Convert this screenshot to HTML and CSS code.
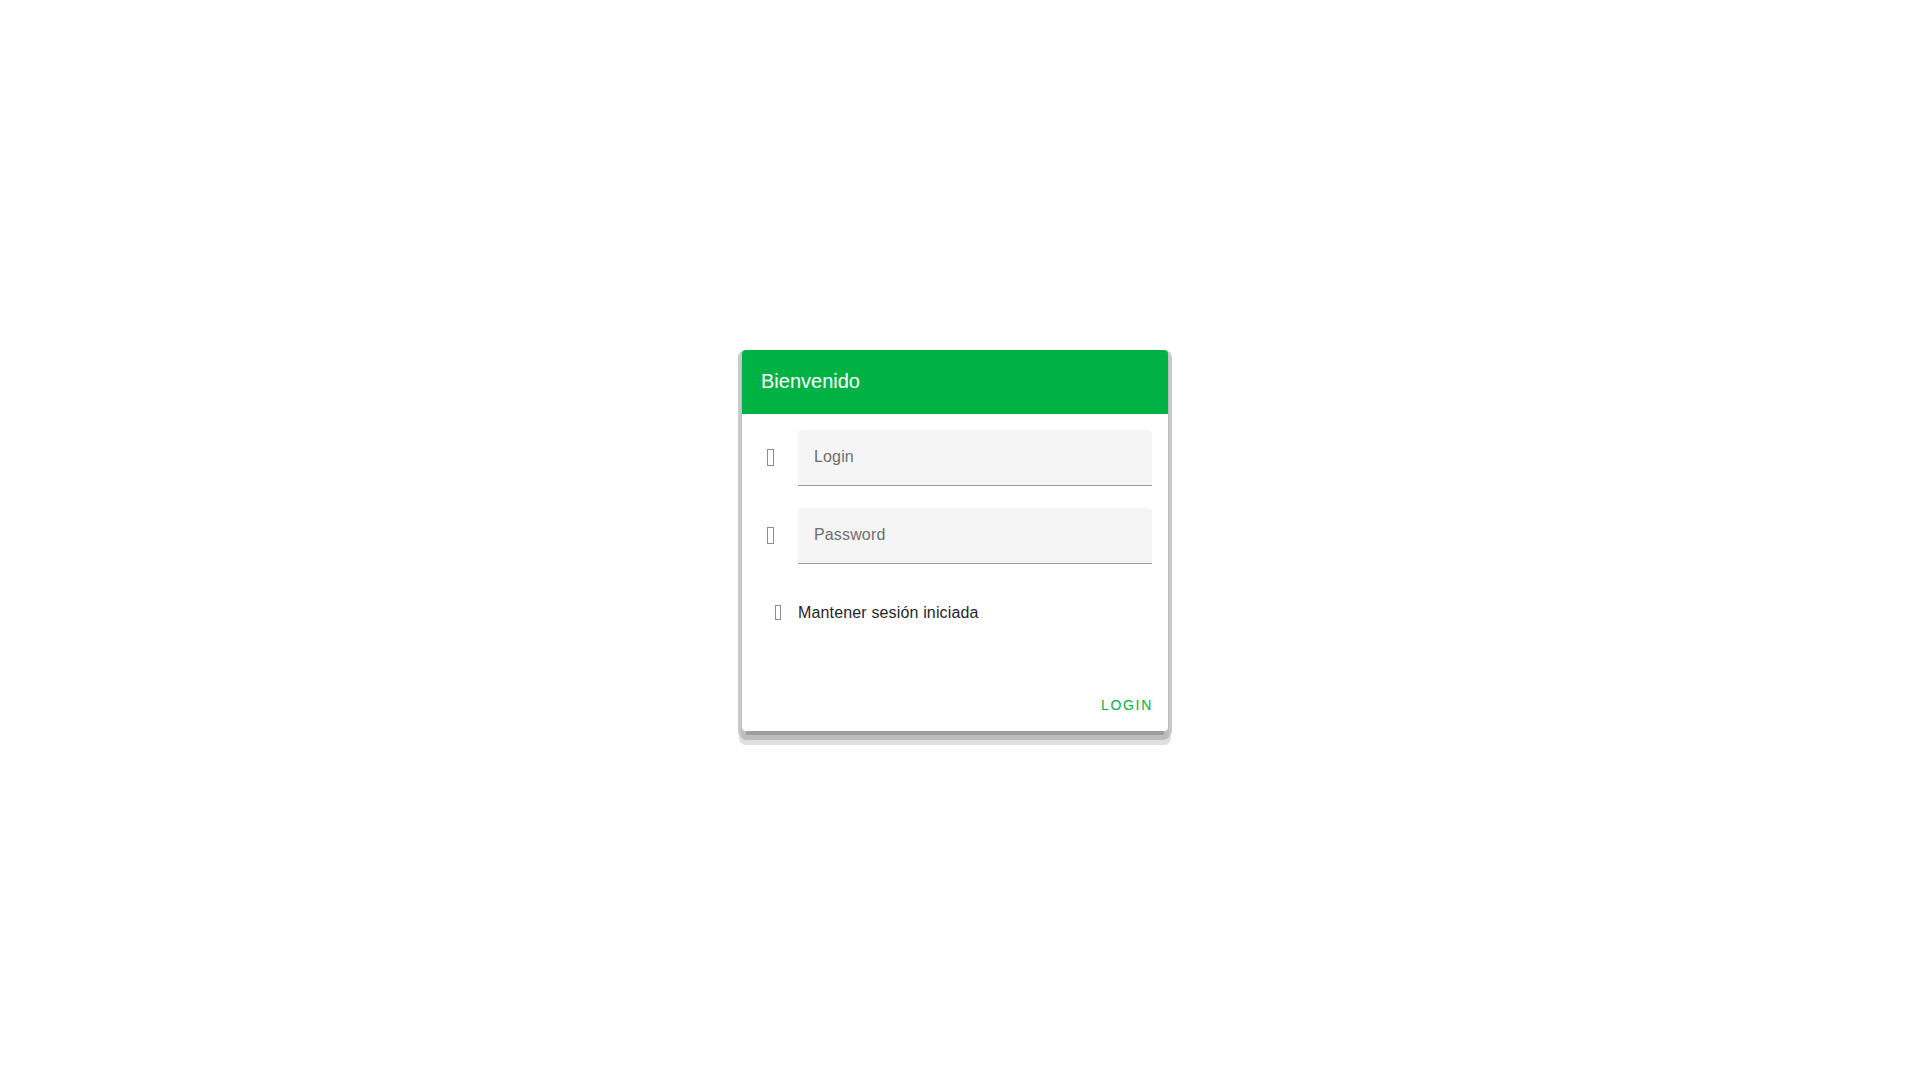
FILE: index.html
```html
<!DOCTYPE html>
<html lang="es">
<head>
<meta charset="utf-8">
<title>Bienvenido</title>
<link rel="stylesheet" href="styles.css">
</head>
<body>
<main class="page">
  <section class="card">
    <header class="card-title">Bienvenido</header>
    <div class="card-text">
      <div class="field-row">
        <span class="prepend"><span class="tofu"></span></span>
        <div class="field"><span class="field-label">Login</span></div>
      </div>
      <div class="field-row">
        <span class="prepend"><span class="tofu"></span></span>
        <div class="field"><span class="field-label">Password</span></div>
      </div>
      <div class="check-row">
        <span class="tofu tofu-small"></span>
        <span class="check-label">Mantener sesión iniciada</span>
      </div>
    </div>
    <div class="card-actions">
      <button class="btn-text" type="button">LOGIN</button>
    </div>
  </section>
</main>
</body>
</html>
```

FILE: styles.css
```css
html, body {
  margin: 0;
  height: 100%;
}

body {
  background: #ffffff;
  font-family: "Liberation Sans", Arial, sans-serif;
  color: #212121;
}

.page {
  min-height: 100vh;
  box-sizing: border-box;
  display: flex;
  align-items: center;
  justify-content: center;
  padding-right: 10px;
}

.card {
  width: 426px;
  background: #ffffff;
  border-radius: 4px;
  box-shadow:
    0 8px 0 -4px #9e9e9e,
    0 8px 0 1px #bdbdbd,
    0 4px 0 4px #cacaca,
    0 11px 0 3px #e0e0e0;
}

.card-title {
  height: 64px;
  box-sizing: border-box;
  display: flex;
  align-items: center;
  padding: 0 19px;
  background: #00b244;
  color: #ffffff;
  font-size: 20px;
  border-radius: 4px 4px 0 0;
}

.card-text {
  display: flex;
  flex-direction: column;
  gap: 22px;
  padding: 16px 16px 0;
}

.field-row {
  display: flex;
  align-items: center;
}

.prepend {
  width: 24px;
  margin-right: 16px;
  display: flex;
  justify-content: center;
}

.tofu {
  display: block;
  width: 7px;
  height: 17px;
  box-sizing: border-box;
  border: 1px solid #8c8c8c;
}

.tofu-small {
  width: 6px;
  height: 15px;
}

.field {
  flex: 1;
  height: 56px;
  box-sizing: border-box;
  background: #f5f5f5;
  border-radius: 4px 4px 0 0;
  border-bottom: 1px solid #9e9e9e;
  display: flex;
  align-items: center;
  padding-left: 16px;
}

.field-label {
  font-size: 16px;
  letter-spacing: 0.15px;
  color: #6e6e6e;
}

.check-row {
  display: flex;
  align-items: center;
  height: 24px;
  padding: 15px 0 54px 17px;
}

.check-row .tofu {
  margin-right: 17px;
}

.check-label {
  font-size: 16px;
  letter-spacing: 0.15px;
  color: #262626;
}

.card-actions {
  display: flex;
  justify-content: flex-end;
  padding: 8px;
}

.btn-text {
  height: 36px;
  padding: 0 8px;
  border: none;
  background: none;
  color: #00b244;
  font-family: "Liberation Sans", Arial, sans-serif;
  font-size: 14px;
  font-weight: 400;
  letter-spacing: 1.7px;
  margin-right: -1px;
  cursor: pointer;
}
```
